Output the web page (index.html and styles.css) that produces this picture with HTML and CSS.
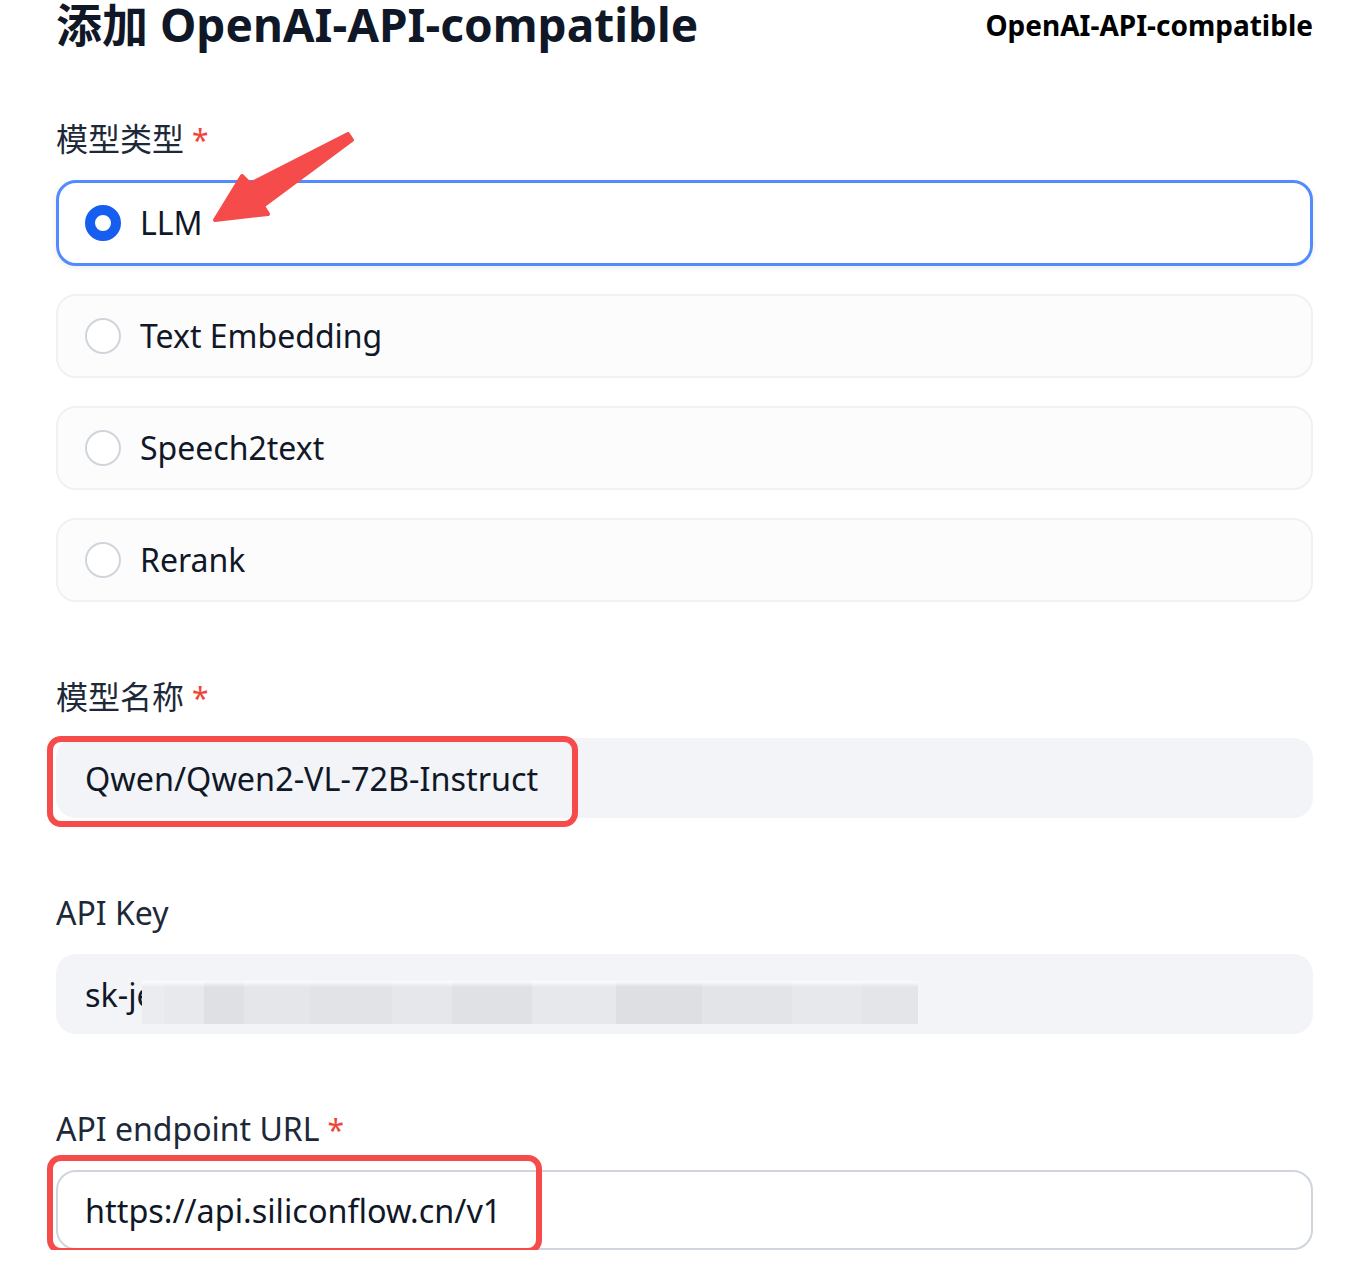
FILE: index.html
```html
<!DOCTYPE html>
<html lang="zh-CN">
<head>
<meta charset="utf-8">
<title>添加 OpenAI-API-compatible</title>
<link rel="stylesheet" href="styles.css">
</head>
<body>
<main class="page">
  <header class="header">
    <h1 class="title">添加 OpenAI-API-compatible</h1>
    <div class="provider">OpenAI-API-compatible</div>
  </header>

  <section class="field field-first">
    <div class="label">模型类型<span class="req">*</span></div>
    <div class="radio-group">
      <div class="card selected"><span class="radio"></span><span class="card-text">LLM</span></div>
      <div class="card"><span class="radio"></span><span class="card-text">Text Embedding</span></div>
      <div class="card"><span class="radio"></span><span class="card-text">Speech2text</span></div>
      <div class="card"><span class="radio"></span><span class="card-text">Rerank</span></div>
    </div>
  </section>

  <section class="field">
    <div class="label">模型名称<span class="req">*</span></div>
    <div class="input-wrap">
      <div class="input">Qwen/Qwen2-VL-72B-Instruct</div>
      <div class="mark mark-name"></div>
    </div>
  </section>

  <section class="field">
    <div class="label">API Key</div>
    <div class="input-wrap">
      <div class="input">sk-je</div>
      <div class="blur"></div>
    </div>
  </section>

  <section class="field">
    <div class="label">API endpoint URL<span class="req">*</span></div>
    <div class="input-wrap">
      <div class="input input-white">https://api.siliconflow.cn/v1</div>
      <div class="mark mark-url"></div>
    </div>
  </section>

  <svg class="arrow" width="1346" height="300" viewBox="0 0 1346 300">
    <polygon points="348,138 352,144 263,210 268,218 215,224 242,180 250,188" fill="#f54b4b" stroke="#f54b4b" stroke-width="4" stroke-linejoin="round"/>
  </svg>
</main>
</body>
</html>
```

FILE: styles.css
```css
* { box-sizing: border-box; }

html, body {
  margin: 0;
  padding: 0;
  background: #ffffff;
}

body {
  font-family: "Noto Sans", "Open Sans", "Noto Sans CJK SC", sans-serif;
  color: #101828;
  overflow: hidden;
}

.page {
  position: relative;
  padding: 0 33px 0 56px;
}

.header {
  display: flex;
  justify-content: space-between;
  align-items: flex-start;
  margin-top: -4px;
}

.title {
  margin: 0;
  font-size: 46px;
  line-height: 56px;
  font-weight: 700;
  color: #101828;
}

.provider {
  padding-top: 11px;
  font-size: 28px;
  line-height: 36px;
  font-weight: 700;
  color: #000000;
}

.field {
  margin-top: 75px;
}

.field-first {
  margin-top: 67px;
}

.label {
  height: 40px;
  font-size: 32px;
  line-height: 40px;
  color: #1d2939;
  margin-bottom: 21px;
  overflow: visible;
}

.req {
  color: #f04438;
  margin-left: 8px;
  font-size: 30px;
  line-height: 0;
}

.radio-group {
  display: flex;
  flex-direction: column;
  gap: 28px;
}

.card {
  display: flex;
  align-items: center;
  height: 84px;
  padding-left: 27px;
  border: 2px solid #f0f1f4;
  border-radius: 20px;
  background: #fcfcfd;
}

.card.selected {
  height: 86px;
  padding-left: 26px;
  border: 3px solid #528bff;
  background: #ffffff;
  box-shadow: 0 2px 6px rgba(16, 24, 40, 0.08);
}

.radio {
  flex: none;
  width: 36px;
  height: 36px;
  border-radius: 50%;
  border: 2px solid #d0d5dd;
  background: #ffffff;
  margin-right: 19px;
}

.selected .radio {
  border: 10px solid #155eef;
}

.card-text {
  font-size: 32px;
  line-height: 40px;
  color: #101828;
}

.input-wrap {
  position: relative;
}

.input {
  height: 80px;
  display: flex;
  align-items: center;
  padding-left: 29px;
  border-radius: 20px;
  background: #f2f4f7;
  font-size: 32.4px;
  color: #101828;
}

.input-white {
  background: #ffffff;
  border: 2px solid #d0d5dd;
  padding-left: 27px;
}

.mark {
  position: absolute;
  border: 6px solid #f54b4b;
  border-radius: 14px;
}

.mark-name {
  left: -9px;
  top: -2px;
  width: 531px;
  height: 91px;
}

.mark-url {
  left: -9px;
  top: -15px;
  width: 495px;
  height: 99px;
}

.blur {
  position: absolute;
  left: 86px;
  top: 27px;
  width: 776px;
  height: 43px;
  background:
    linear-gradient(to bottom, rgba(255,255,255,0.9) 0, rgba(255,255,255,0) 6px),
    linear-gradient(to right,
      #ebecef 0, #ebecef 22px,
      #e8e9ec 22px, #e8e9ec 62px,
      #dfe0e3 62px, #dfe0e3 102px,
      #e5e6e9 102px, #e5e6e9 168px,
      #e2e3e6 168px, #e2e3e6 250px,
      #e6e7ea 250px, #e6e7ea 310px,
      #e0e1e4 310px, #e0e1e4 390px,
      #e7e8eb 390px, #e7e8eb 474px,
      #dedfe2 474px, #dedfe2 560px,
      #e3e4e7 560px, #e3e4e7 650px,
      #e7e8eb 650px, #e7e8eb 720px,
      #e4e5e8 720px, #e4e5e8 776px);
}

.arrow {
  position: absolute;
  left: 0;
  top: 0;
  pointer-events: none;
}
```
